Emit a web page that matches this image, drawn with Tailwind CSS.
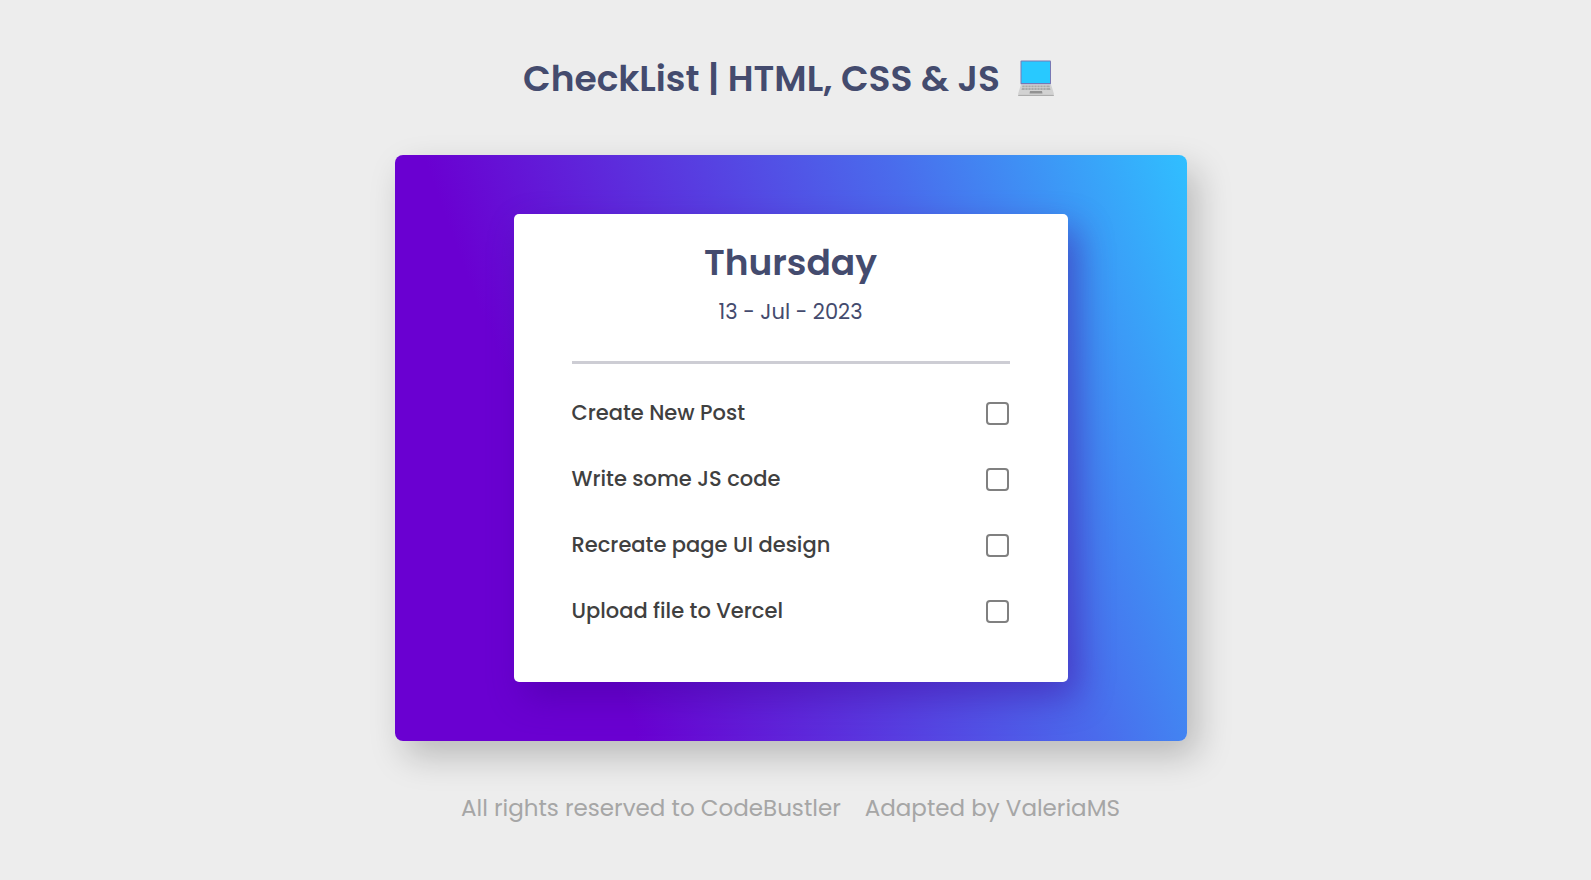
<!DOCTYPE html>
<html lang="en">
<head>
<meta charset="utf-8">
<meta name="viewport" content="width=device-width, initial-scale=1">
<title>CheckList</title>
<script src="https://cdn.jsdelivr.net/npm/@tailwindcss/browser@4"></script>
</head>
<body class="flex min-h-screen flex-col items-center bg-[#ededed] pr-[10px] font-[Poppins,Inter,sans-serif] text-[#444b6e]">
  <header class="flex items-center gap-[18px] pt-[50px] pr-5 pl-4">
    <h1 class="pt-0.5 text-4xl leading-[54px] font-semibold">CheckList | HTML, CSS &amp; JS</h1>
    <svg class="h-9 w-9 shrink-0" viewBox="0 0 36 36" aria-hidden="true">
      <rect x="2.5" y="0.5" width="30.500" height="24" rx="1" fill="#7878b4"/>
      <rect x="3.500" y="1.500" width="28.500" height="21.500" fill="#28c9ff"/>
      <path d="M3 24.500h30L36 34H0z" fill="#d2d2d2"/>
      <path d="M4.500 25.500h27l1 4.500H3.500z" fill="#aaaaaa"/>
      <path d="M4 27.500h28M7 25v5M10 25v5M13 25v5M16 25v5M19 25v5M22 25v5M25 25v5M28 25v5" stroke="#d2d2d2" stroke-width=".7"/>
      <path d="M12 31h12l.5 2.500h-13z" fill="#929292"/>
      <rect y="34.500" width="36" height="1.500" rx=".7" fill="#adadad"/>
    </svg>
  </header>

  <main class="mt-[49px] w-full max-w-[792px] rounded-lg bg-[linear-gradient(70deg,#6a00d1_24%,#4a6bec_70%,#30bfff_100%)] px-[119px] py-[59px] shadow-[10px_15px_35px_rgba(0,0,0,0.22)]">
    <section class="rounded-[5px] bg-white px-[58px] pt-5 pb-[38px] shadow-[10px_15px_35px_rgba(65,0,150,0.45)]">
      <h2 class="text-center text-4xl leading-[58px] font-semibold">Thursday</h2>
      <p class="text-center text-[21px] leading-10">13 - Jul - 2023</p>
      <hr class="mt-[29px] mb-4 border-t-3 border-[#cdcdd4]">
      <ul class="text-[21px] leading-[34px] font-medium text-[#404040]">
        <li><label class="flex h-[66px] items-center justify-between">Create New Post<input type="checkbox" class="mr-px size-[23px] appearance-none rounded border-2 border-[#808080] bg-white checked:border-[#6a00d1] checked:bg-[#6a00d1]"></label></li>
        <li><label class="flex h-[66px] items-center justify-between">Write some JS code<input type="checkbox" class="mr-px size-[23px] appearance-none rounded border-2 border-[#808080] bg-white checked:border-[#6a00d1] checked:bg-[#6a00d1]"></label></li>
        <li><label class="flex h-[66px] items-center justify-between">Recreate page UI design<input type="checkbox" class="mr-px size-[23px] appearance-none rounded border-2 border-[#808080] bg-white checked:border-[#6a00d1] checked:bg-[#6a00d1]"></label></li>
        <li><label class="flex h-[66px] items-center justify-between">Upload file to Vercel<input type="checkbox" class="mr-px size-[23px] appearance-none rounded border-2 border-[#808080] bg-white checked:border-[#6a00d1] checked:bg-[#6a00d1]"></label></li>
      </ul>
    </section>
  </main>

  <footer class="mt-[49px] flex flex-wrap justify-center gap-x-6 px-4 pb-8 text-[23px] leading-9 text-[#a6a6a6]">
    <a href="#">All rights reserved to CodeBustler</a>
    <a href="#">Adapted by ValeriaMS</a>
  </footer>
</body>
</html>
